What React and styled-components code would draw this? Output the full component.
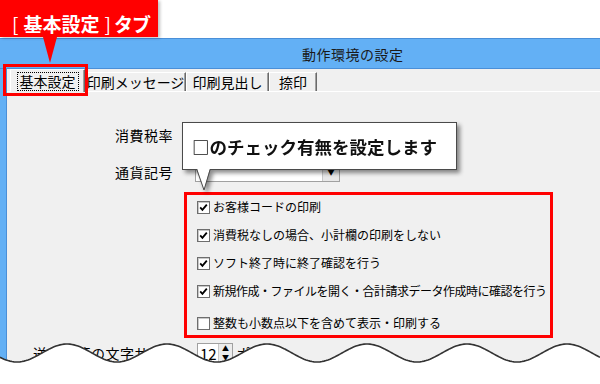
import styled, { createGlobalStyle } from "styled-components"

const GlobalStyle = createGlobalStyle`
  html, body {
    margin: 0;
    padding: 0;
    background: #fff;
  }
  body {
    font-family: "Noto Sans CJK JP", "Noto Sans", sans-serif;
  }
`

const Page = styled.div`
  position: relative;
  width: 600px;
  height: 384px;
  overflow: hidden;
  background: #fff;
  padding-top: 38px;
  box-sizing: border-box;
  display: flex;
  flex-direction: column;
`

const Window = styled.div`
  flex: 1;
  display: flex;
  flex-direction: column;
`

const TitleBar = styled.div`
  height: 29px;
  border-top: 1px solid #4a8fd8;
  border-bottom: 1px solid #4a8fd8;
  background: #63b0f5;
  padding-left: 302px;
  display: flex;
  align-items: center;
  font-size: 14px;
  letter-spacing: 0.5px;
  color: #1a1a1a;
`

const Body = styled.div`
  flex: 1;
  display: flex;
  border-left: 6px solid #63b0f5;
`

const Inner = styled.div`
  flex: 1;
  display: flex;
  flex-direction: column;
  border-left: 1px solid #4a8fd8;
  background: #f0f0f0;
`

const TabBar = styled.div`
  height: 22px;
  display: flex;
  align-items: flex-end;
  padding-left: 3px;
  border-bottom: 1px solid #fff;
`

const Tab = styled.div`
  box-sizing: border-box;
  width: ${p => p.$w}px;
  height: ${p => (p.$active ? 23 : 19)}px;
  margin-bottom: ${p => (p.$active ? -1 : 0)}px;
  position: relative;
  z-index: ${p => (p.$active ? 1 : 0)};
  background: #f0f0f0;
  border-top: 1px solid #fff;
  border-left: 1px solid #fff;
  border-right: 1px solid #6a6a6a;
  box-shadow: inset -1px 0 0 #a0a0a0;
  display: flex;
  align-items: center;
  justify-content: center;
  font-size: 14px;
  line-height: 17px;
  color: #000;
  white-space: nowrap;
`

const TabText = styled.span`
  padding: 0 2px;
  border: 1px dotted ${p => (p.$focus ? "#000" : "transparent")};
`

const Panel = styled.div`
  flex: 1;
  display: flex;
  flex-direction: column;
`

const FieldRow = styled.div`
  display: flex;
  align-items: center;
  height: 20px;
  margin-top: ${p => p.$top}px;
  padding-left: ${p => p.$indent}px;
`

const FieldLabel = styled.span`
  width: ${p => p.$w || 80}px;
  font-size: 14px;
  letter-spacing: 0.5px;
  line-height: 20px;
  color: #000;
  white-space: nowrap;
`

const Select = styled.div`
  box-sizing: border-box;
  width: 145px;
  height: 19px;
  background: #fff;
  border: 1px solid #a0a0a0;
  display: flex;
  justify-content: flex-end;
`

const DropButton = styled.div`
  width: 16px;
  background: #e8e8e8;
  border-left: 1px solid #c8c8c8;
  display: flex;
  align-items: center;
  justify-content: center;
  font-size: 7px;
  color: #000;
`

const CheckGroup = styled.div`
  box-sizing: border-box;
  width: 369px;
  height: 146px;
  margin: 10px 0 0 177px;
  border: 3px solid #ff0000;
  padding: 0 0 0 10px;
  display: flex;
  flex-direction: column;
  gap: 4px;
`

const CheckRow = styled.label`
  display: flex;
  align-items: center;
  gap: 3px;
  height: 24px;
  margin-top: ${p => p.$gapTop || 0}px;
  font-size: 12px;
  line-height: 14px;
  letter-spacing: ${p => (p.$tight ? "-0.5px" : "0")};
  color: #000;
  white-space: nowrap;
`

const Box = styled.span`
  box-sizing: border-box;
  flex: none;
  width: 13px;
  height: 13px;
  background: #fff;
  border: 1px solid #6e6e6e;
  box-shadow: inset 1px 1px 0 #c8c8c8;
  display: flex;
  align-items: center;
  justify-content: center;
`

const Spin = styled.div`
  box-sizing: border-box;
  width: 36px;
  height: 21px;
  background: #fff;
  border: 1px solid #a0a0a0;
  display: flex;
  font-size: 15px;
  line-height: 19px;
  padding-left: 2px;
`

const SpinValue = styled.span`
  flex: 1;
`

const SpinButtons = styled.div`
  width: 13px;
  display: flex;
  flex-direction: column;
  border-left: 1px solid #c8c8c8;
  font-size: 7px;
  line-height: 9px;
  text-align: center;
  background: #ececec;
`

const Badge = styled.div`
  position: absolute;
  left: 0;
  top: 0;
  width: 158px;
  height: 37px;
  box-sizing: border-box;
  background: #ff0000;
  box-shadow: 2px 1px 3px rgba(0, 0, 0, 0.25);
  color: #fff;
  font-weight: 700;
  font-size: 19px;
  line-height: 20px;
  padding: 14px 0 0 12px;
  white-space: nowrap;
  z-index: 5;

  &::after {
    content: "";
    position: absolute;
    left: 43px;
    top: 37px;
    border-left: 7px solid transparent;
    border-right: 7px solid transparent;
    border-top: 26px solid #ff0000;
  }
`

const Bracket = styled.span`
  font-weight: 400;
  margin: ${p => (p.$close ? "0 3px 0 5px" : "0 5px 0 0")};
`

const BadgeTail = styled.span`
  letter-spacing: -1px;
`

const TabMarker = styled.div`
  position: absolute;
  left: 3px;
  top: 64px;
  width: 85px;
  height: 32px;
  box-sizing: border-box;
  border: 3px solid #ff0000;
  z-index: 4;
`

const CalloutWrap = styled.div`
  position: absolute;
  left: 182px;
  top: 122px;
  z-index: 6;
  filter: drop-shadow(3px 3px 2px rgba(0, 0, 0, 0.45));
`

const CalloutBox = styled.div`
  box-sizing: border-box;
  width: 275px;
  height: 48px;
  background: #fff;
  border: 1px solid #4a4a4a;
  display: flex;
  align-items: center;
  padding-left: 9px;
  font-size: 17.5px;
  font-weight: 700;
  color: #111;
  white-space: nowrap;
`

const CalloutTail = styled.svg`
  position: absolute;
  left: 13px;
  top: 46px;
`

const Wave = styled.svg`
  position: absolute;
  left: 0;
  bottom: 0;
  z-index: 8;
`

const wavePoints = () => {
  const pts = []
  for (let x = 0; x <= 600; x += 2) {
    const y = 18 - 9 * Math.cos((2 * Math.PI * (x - 67)) / 100)
    pts.push(`${x},${y.toFixed(2)}`)
  }
  return pts
}

const Check = ({ on, children, gapTop, tight }) => (
  <CheckRow $gapTop={gapTop} $tight={tight}>
    <Box>
      {on && (
        <svg width="9" height="9" viewBox="0 0 9 9">
          <path d="M1.2 4.4 L3.4 6.8 L7.8 1.6" fill="none" stroke="#000" strokeWidth="1.8" />
        </svg>
      )}
    </Box>
    {children}
  </CheckRow>
)

export default function App() {
  const pts = wavePoints()
  return (
    <Page>
      <GlobalStyle />
      <Window>
        <TitleBar>動作環境の設定</TitleBar>
        <Body>
          <Inner>
            <TabBar>
              <Tab $active $w={75}><TabText $focus>基本設定</TabText></Tab>
              <Tab $w={101}><TabText>印刷メッセージ</TabText></Tab>
              <Tab $w={83}><TabText>印刷見出し</TabText></Tab>
              <Tab $w={48}><TabText>捺印</TabText></Tab>
            </TabBar>
            <Panel>
              <FieldRow $top={33} $indent={108}>
                <FieldLabel>消費税率</FieldLabel>
              </FieldRow>
              <FieldRow $top={17} $indent={108}>
                <FieldLabel>通貨記号</FieldLabel>
                <Select><DropButton>▼</DropButton></Select>
              </FieldRow>
              <CheckGroup>
                <Check on>お客様コードの印刷</Check>
                <Check on>消費税なしの場合、小計欄の印刷をしない</Check>
                <Check on>ソフト終了時に終了確認を行う</Check>
                <Check on tight>新規作成・ファイルを開く・合計請求データ作成時に確認を行う</Check>
                <Check gapTop={4}>整数も小数点以下を含めて表示・印刷する</Check>
              </CheckGroup>
              <FieldRow $top={5} $indent={26}>
                <FieldLabel $w={164}>送り状等の文字サイズ</FieldLabel>
                <Spin>
                  <SpinValue>12</SpinValue>
                  <SpinButtons><span>▲</span><span>▼</span></SpinButtons>
                </Spin>
                <FieldLabel $w={60}>&nbsp;ポイント</FieldLabel>
              </FieldRow>
            </Panel>
          </Inner>
        </Body>
      </Window>

      <Badge>
        <Bracket>[</Bracket>基本設定<Bracket $close>]</Bracket><BadgeTail>タブ</BadgeTail>
      </Badge>
      <TabMarker />

      <CalloutWrap>
        <CalloutBox>□のチェック有無を設定します</CalloutBox>
        <CalloutTail width="20" height="24" viewBox="0 0 20 24">
          <polygon points="2,0 9,22 15,0" fill="#fff" />
          <polyline points="2,2 9,22 15,2" fill="none" stroke="#4a4a4a" strokeWidth="1" />
        </CalloutTail>
      </CalloutWrap>

      <Wave width="600" height="49" viewBox="0 0 600 49">
        <polygon points={`${pts.join(" ")} 600,49 0,49`} fill="#fff" />
        <polyline points={pts.join(" ")} fill="none" stroke="#333" strokeWidth="1.6" />
      </Wave>
    </Page>
  )
}
